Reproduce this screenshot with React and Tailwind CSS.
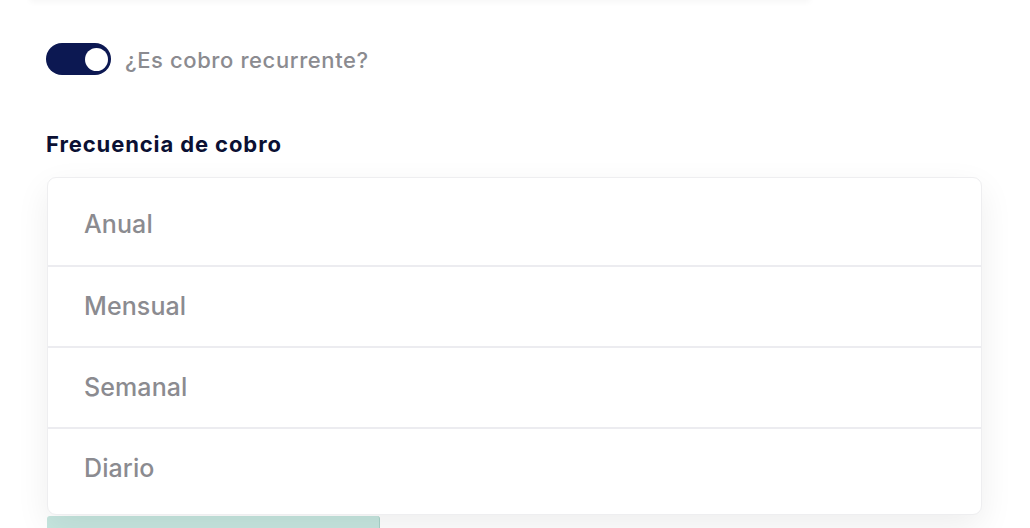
export default function App() {
  const items = ["Anual", "Mensual", "Semanal", "Diario"];
  return (
    <div
      className="relative w-[1030px] h-[528px] overflow-hidden bg-white"
      style={{ fontFamily: "Inter, 'Noto Sans', sans-serif" }}
    >
      <div className="absolute left-[30px] right-[220px] top-[-20px] h-[20px] shadow-[0_2px_6px_rgba(0,0,0,0.04)]" />
      <div className="pt-[43px] pl-[46px] pr-[48px]">
        <div className="flex items-center gap-[14px]">
          <div className="relative w-[65px] h-[32px] rounded-full bg-[#0c1852]">
            <div className="absolute right-[3px] top-[4.5px] w-[23px] h-[23px] rounded-full bg-white" />
          </div>
          <span className="text-[22px] font-medium text-[#8b8b90] tracking-[0.6px] leading-[32px] translate-y-[1px]">
            ¿Es cobro recurrente?
          </span>
        </div>
        <div className="mt-[55px] text-[22px] font-bold text-[#0b1033] leading-[28px] tracking-[0.9px]">
          Frecuencia de cobro
        </div>
        <div className="mt-[19px] ml-px w-[935px] rounded-[9px] border border-[#eeeef0] bg-white py-[6px] shadow-[0_12px_34px_rgba(0,0,0,0.07)] relative z-10">
          {items.map((t, i) => (
            <div
              key={t}
              className={
                "h-[81px] flex items-center pl-[36px] text-[25px] font-medium text-[#8b8b90] tracking-[0.1px] " +
                (i > 0 ? "border-t-2 border-[#ececf0]" : "")
              }
            >
              {t}
            </div>
          ))}
        </div>
        <div className="mt-px ml-px w-[333px] h-[20px] rounded-t-[3px] bg-[#c6e6df] border-r border-[#a9d3c9]" />
      </div>
    </div>
  );
}
